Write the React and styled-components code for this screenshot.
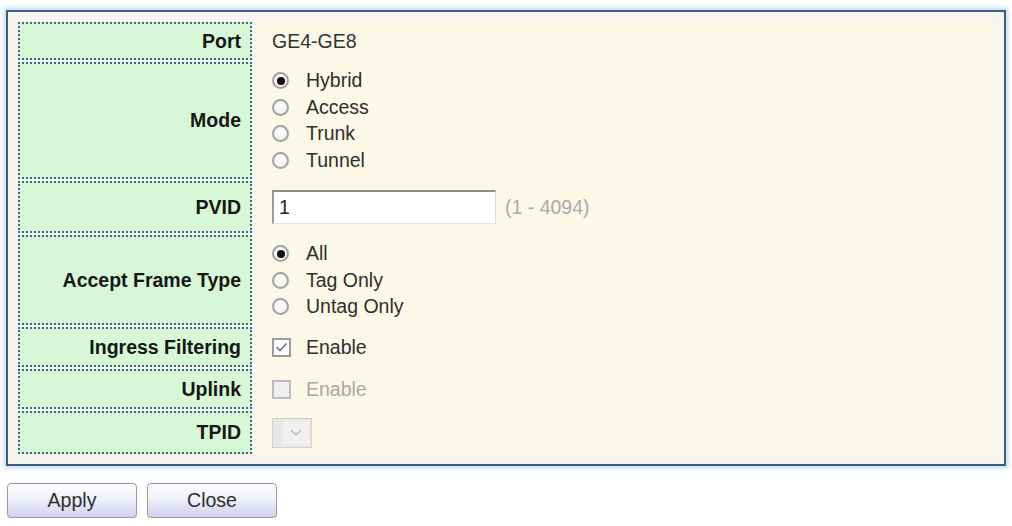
import * as React from "react";
import styled, { createGlobalStyle } from "styled-components";

const GlobalStyle = createGlobalStyle`
    body {
        margin: 0;
        background: #ffffff;
        font-family: "Liberation Sans", Arial, sans-serif;
        font-size: 19.5px;
        color: #333333;
    }
`;

const Page = styled.div`
    padding: 10px 6px 0 6px;
    width: 1000px;
`;

const Panel = styled.div`
    border: 2px solid #3f5c79;
    box-shadow: 0 0 5px 2px rgba(160, 200, 235, 0.7);
    background: #f8f4ef;
    padding: 10px;
`;

const Grid = styled.div`
    display: grid;
    grid-template-columns: 234px 1fr;
    column-gap: 3px;
    row-gap: 2px;
`;

const Label = styled.div`
    box-sizing: border-box;
    height: ${(props) => props.h}px;
    background: #d6f8d6;
    border: 2px dotted #3d6882;
    display: flex;
    align-items: center;
    justify-content: flex-end;
    padding-right: 9px;
    font-weight: bold;
    color: #161616;
`;

const Value = styled.div`
    box-sizing: border-box;
    height: ${(props) => props.h}px;
    background: #fcf8e7;
    display: flex;
    align-items: center;
    padding-left: 17px;
    color: #333333;
`;

const OptionList = styled.div`
    display: flex;
    flex-direction: column;
`;

const Option = styled.div`
    display: flex;
    align-items: center;
    height: 26.5px;
    color: ${(props) => (props.disabled ? "#a8a8a8" : "#2e2e2e")};
`;

const Radio = styled.span`
    box-sizing: border-box;
    width: 17px;
    height: 17px;
    border-radius: 50%;
    border: 2px solid #a2a2a2;
    background: radial-gradient(circle at 50% 35%, #ffffff, #ececec);
    display: flex;
    align-items: center;
    justify-content: center;
    margin-right: 17px;
    flex-shrink: 0;

    &::after {
        content: "";
        width: 8px;
        height: 8px;
        border-radius: 50%;
        background: ${(props) => (props.checked ? "#111111" : "transparent")};
    }
`;

const Check = styled.span`
    box-sizing: border-box;
    width: 19px;
    height: 19px;
    border: 2px solid ${(props) => (props.disabled ? "#bcbcbc" : "#9c9c9c")};
    background: ${(props) => (props.disabled ? "#f1efee" : "#ffffff")};
    display: flex;
    align-items: center;
    justify-content: center;
    margin-right: 15px;
    flex-shrink: 0;
`;

const TextInput = styled.div`
    box-sizing: border-box;
    width: 224px;
    height: 34px;
    background: #ffffff;
    border-top: 2px solid #8d8d8d;
    border-left: 2px solid #9c9c9c;
    border-right: 1px solid #dcdcdc;
    border-bottom: 1px solid #e4e4e4;
    display: flex;
    align-items: center;
    padding-left: 5px;
    color: #222222;
`;

const Hint = styled.span`
    margin-left: 9px;
    color: #aaaaaa;
`;

const Select = styled.div`
    box-sizing: border-box;
    width: 40px;
    height: 30px;
    background: #e7e7e5;
    border: 1px solid #d2d2d0;
    display: flex;
    justify-content: flex-end;
    padding: 2px;
`;

const SelectArrow = styled.span`
    width: 26px;
    background: #f0f0ee;
    display: flex;
    align-items: center;
    justify-content: center;
`;

const Buttons = styled.div`
    display: flex;
    gap: 10px;
    margin-top: 17px;
    padding-left: 1px;
`;

const Button = styled.button`
    box-sizing: border-box;
    width: 130px;
    height: 35px;
    border: 1px solid #9a9a9e;
    border-radius: 4px;
    background: linear-gradient(#fdfdff 0%, #f0f0fb 45%, #d0d0ee 100%);
    box-shadow: 0 1px 1px rgba(0, 0, 0, 0.15);
    font-family: "Liberation Sans", Arial, sans-serif;
    font-size: 19.5px;
    color: #2e2e2e;
    padding: 0;
`;

const RadioGroup = ({ options, selected }) => (
    <OptionList>
        {options.map((opt) => (
            <Option key={opt}>
                <Radio checked={opt === selected} />
                {opt}
            </Option>
        ))}
    </OptionList>
);

const CheckOption = ({ checked, disabled }) => (
    <Option disabled={disabled}>
        <Check disabled={disabled}>
            {checked && (
                <svg width="13" height="11" viewBox="0 0 13 11">
                    <path
                        d="M1.5 5 L5 8.5 L11.5 1.5"
                        fill="none"
                        stroke="#707070"
                        strokeWidth="1.6"
                    />
                </svg>
            )}
        </Check>
        Enable
    </Option>
);

export default function App() {
    return (
        <Page>
            <GlobalStyle />
            <Panel>
                <Grid>
                    <Label h={38}>Port</Label>
                    <Value h={38}>GE4-GE8</Value>

                    <Label h={117}>Mode</Label>
                    <Value h={117}>
                        <RadioGroup
                            options={["Hybrid", "Access", "Trunk", "Tunnel"]}
                            selected="Hybrid"
                        />
                    </Value>

                    <Label h={52}>PVID</Label>
                    <Value h={52}>
                        <TextInput>1</TextInput>
                        <Hint>(1 - 4094)</Hint>
                    </Value>

                    <Label h={90}>Accept Frame Type</Label>
                    <Value h={90}>
                        <RadioGroup
                            options={["All", "Tag Only", "Untag Only"]}
                            selected="All"
                        />
                    </Value>

                    <Label h={40}>Ingress Filtering</Label>
                    <Value h={40}>
                        <CheckOption checked />
                    </Value>

                    <Label h={40}>Uplink</Label>
                    <Value h={40}>
                        <CheckOption disabled />
                    </Value>

                    <Label h={43}>TPID</Label>
                    <Value h={43}>
                        <Select>
                            <SelectArrow>
                                <svg width="12" height="7" viewBox="0 0 12 7">
                                    <path
                                        d="M1 1 L6 6 L11 1"
                                        fill="none"
                                        stroke="#b0b0b0"
                                        strokeWidth="1.2"
                                    />
                                </svg>
                            </SelectArrow>
                        </Select>
                    </Value>
                </Grid>
            </Panel>
            <Buttons>
                <Button>Apply</Button>
                <Button>Close</Button>
            </Buttons>
        </Page>
    );
}
